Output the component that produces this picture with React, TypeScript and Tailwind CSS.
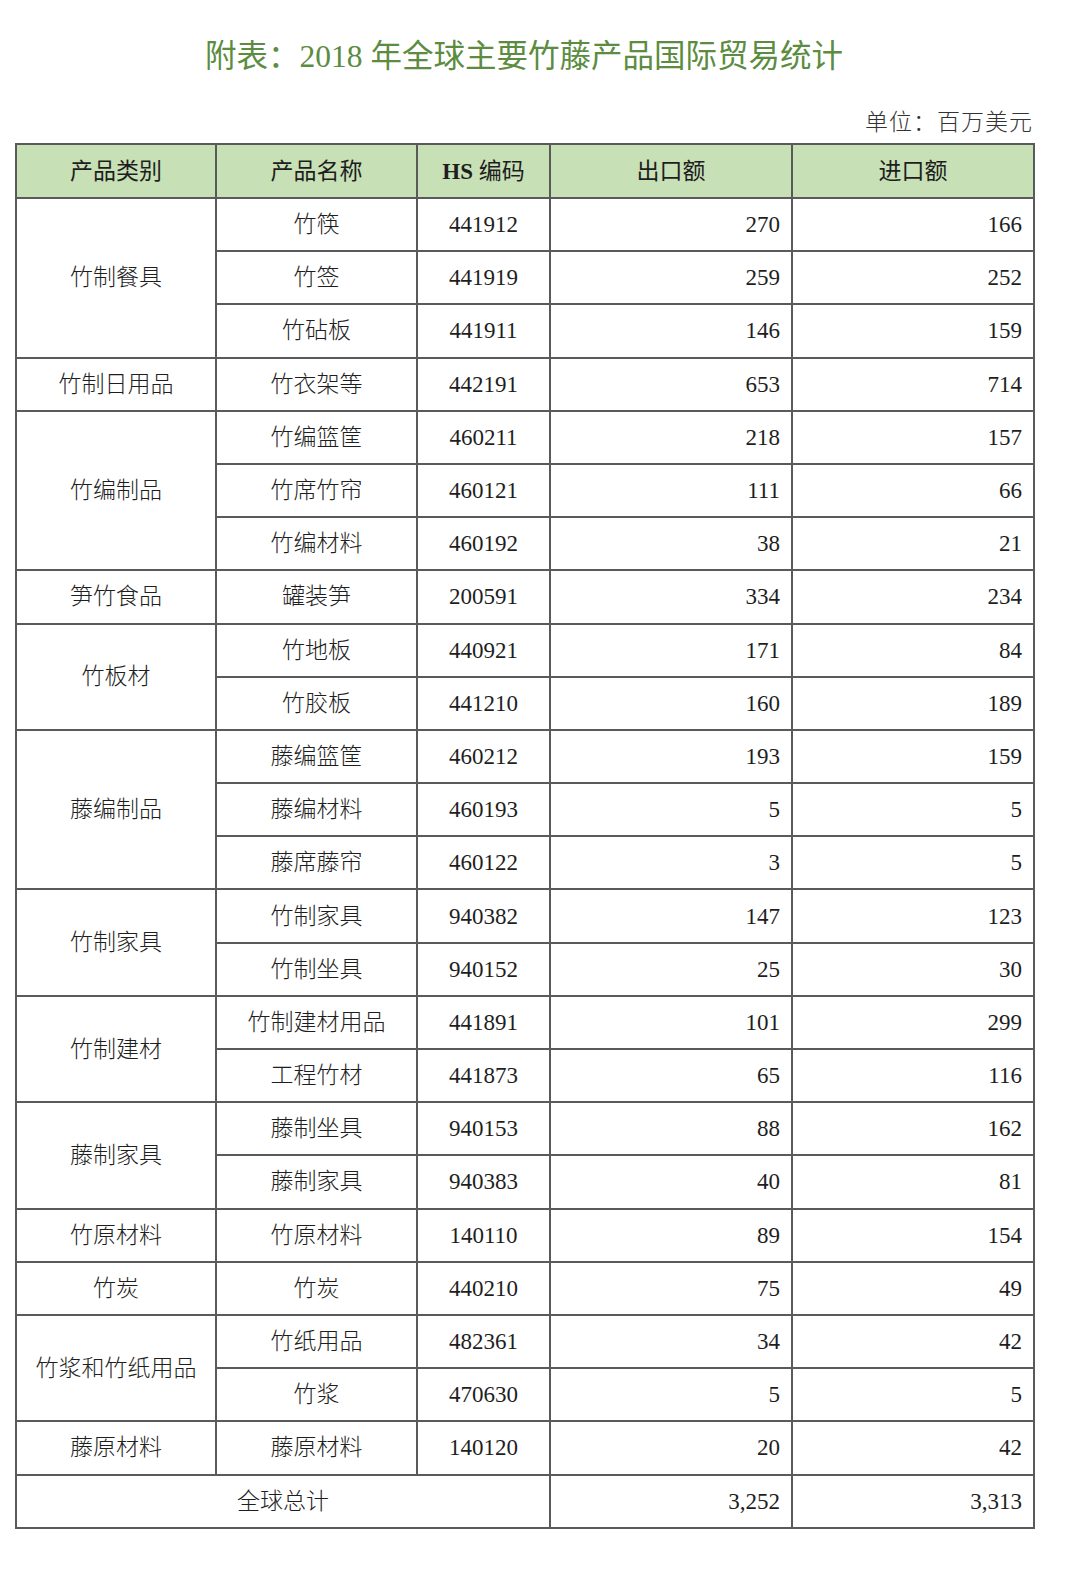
type Item = { name: string; code: string; exp: string; imp: string };
type Group = { category: string; items: Item[] };

const groups: Group[] = [
  {
    category: "竹制餐具",
    items: [
      { name: "竹筷", code: "441912", exp: "270", imp: "166" },
      { name: "竹签", code: "441919", exp: "259", imp: "252" },
      { name: "竹砧板", code: "441911", exp: "146", imp: "159" },
    ],
  },
  { category: "竹制日用品", items: [{ name: "竹衣架等", code: "442191", exp: "653", imp: "714" }] },
  {
    category: "竹编制品",
    items: [
      { name: "竹编篮筐", code: "460211", exp: "218", imp: "157" },
      { name: "竹席竹帘", code: "460121", exp: "111", imp: "66" },
      { name: "竹编材料", code: "460192", exp: "38", imp: "21" },
    ],
  },
  { category: "笋竹食品", items: [{ name: "罐装笋", code: "200591", exp: "334", imp: "234" }] },
  {
    category: "竹板材",
    items: [
      { name: "竹地板", code: "440921", exp: "171", imp: "84" },
      { name: "竹胶板", code: "441210", exp: "160", imp: "189" },
    ],
  },
  {
    category: "藤编制品",
    items: [
      { name: "藤编篮筐", code: "460212", exp: "193", imp: "159" },
      { name: "藤编材料", code: "460193", exp: "5", imp: "5" },
      { name: "藤席藤帘", code: "460122", exp: "3", imp: "5" },
    ],
  },
  {
    category: "竹制家具",
    items: [
      { name: "竹制家具", code: "940382", exp: "147", imp: "123" },
      { name: "竹制坐具", code: "940152", exp: "25", imp: "30" },
    ],
  },
  {
    category: "竹制建材",
    items: [
      { name: "竹制建材用品", code: "441891", exp: "101", imp: "299" },
      { name: "工程竹材", code: "441873", exp: "65", imp: "116" },
    ],
  },
  {
    category: "藤制家具",
    items: [
      { name: "藤制坐具", code: "940153", exp: "88", imp: "162" },
      { name: "藤制家具", code: "940383", exp: "40", imp: "81" },
    ],
  },
  { category: "竹原材料", items: [{ name: "竹原材料", code: "140110", exp: "89", imp: "154" }] },
  { category: "竹炭", items: [{ name: "竹炭", code: "440210", exp: "75", imp: "49" }] },
  {
    category: "竹浆和竹纸用品",
    items: [
      { name: "竹纸用品", code: "482361", exp: "34", imp: "42" },
      { name: "竹浆", code: "470630", exp: "5", imp: "5" },
    ],
  },
  { category: "藤原材料", items: [{ name: "藤原材料", code: "140120", exp: "20", imp: "42" }] },
];

const font = "font-['Liberation_Serif','Noto_Sans_CJK_SC',serif]";
const cell = "border-2 border-[#5a5a5a] text-[23px] text-[#1e1e1e] leading-none";
const num = "text-[23.5px]";

export default function App() {
  return (
    <div className={`w-[1080px] h-[1570px] bg-white ${font}`}>
      <div className="ml-[15px] w-[1018px] pt-[38px]">
        <h1 className="text-center text-[31.5px] leading-[38px] text-[#5b8c3f]">
          附表：2018 年全球主要竹藤产品国际贸易统计
        </h1>
        <div className="mt-[34px] text-right text-[23px] leading-[26px] text-[#333] font-light tracking-[1px]">
          单位：百万美元
        </div>
        <table className="mt-[7px] w-full border-collapse table-fixed">
          <colgroup>
            <col className="w-[200px]" />
            <col className="w-[201px]" />
            <col className="w-[133px]" />
            <col className="w-[242px]" />
            <col className="w-[242px]" />
          </colgroup>
          <thead>
            <tr className="h-[54px] bg-[#c8e0b6]">
              {["产品类别", "产品名称"].map((h) => (
                <th key={h} className={`${cell} font-normal`}>
                  {h}
                </th>
              ))}
              <th className={`${cell} font-normal`}>
                <span className="font-bold">HS</span> 编码
              </th>
              <th className={`${cell} font-normal`}>出口额</th>
              <th className={`${cell} font-normal`}>进口额</th>
            </tr>
          </thead>
          <tbody>
            {groups.map((g) =>
              g.items.map((it, i) => (
                <tr key={g.category + it.code} className="h-[53.2px]">
                  {i === 0 && (
                    <td rowSpan={g.items.length} className={`${cell} text-center font-light`}>
                      {g.category}
                    </td>
                  )}
                  <td className={`${cell} text-center font-light`}>{it.name}</td>
                  <td className={`${cell} ${num} text-center`}>{it.code}</td>
                  <td className={`${cell} ${num} text-right pr-[11px]`}>{it.exp}</td>
                  <td className={`${cell} ${num} text-right pr-[11px]`}>{it.imp}</td>
                </tr>
              ))
            )}
            <tr className="h-[53.2px]">
              <td colSpan={3} className={`${cell} text-center font-light`}>
                全球总计
              </td>
              <td className={`${cell} ${num} text-right pr-[11px]`}>3,252</td>
              <td className={`${cell} ${num} text-right pr-[11px]`}>3,313</td>
            </tr>
          </tbody>
        </table>
      </div>
    </div>
  );
}
